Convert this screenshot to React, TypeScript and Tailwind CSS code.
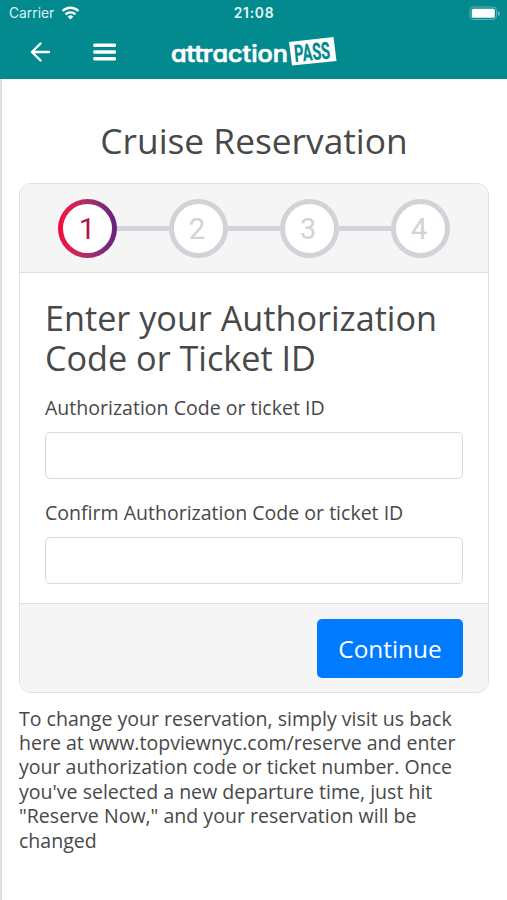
const LINE = 'whitespace-nowrap';

function StatusBar() {
  return (
    <div className="flex h-[26px] items-center px-[9px] pt-[2px] font-['Inter',sans-serif] text-white">
      <div className="flex flex-1 items-center gap-[7px]">
        <span className="text-[13.8px] leading-none text-[#dcf1f1]">Carrier</span>
        <svg className="-mt-[2px]" width="19" height="14" viewBox="0 0 18 14" fill="none" stroke="white" strokeWidth="2.3">
          <path d="M1 5a11.5 11.5 0 0 1 16 0" />
          <path d="M4 8.3a7.2 7.2 0 0 1 10 0" />
          <path d="M9 13.4 6.2 10.7a4 4 0 0 1 5.6 0Z" fill="white" stroke="none" />
        </svg>
      </div>
      <span className="pl-px text-[13.8px] leading-none font-semibold tracking-[0.8px] text-[#e8f6f6]">21:08</span>
      <div className="flex flex-1 justify-end">
        <svg className="-mt-[1px] -mr-[2px]" width="31" height="15" viewBox="0 0 31 15">
          <rect x="1" y="1" width="26.5" height="12.5" rx="3.5" fill="none" stroke="#5fb4b7" />
          <rect x="2.8" y="2.8" width="23" height="9" rx="1.5" fill="white" />
          <path d="M29 5v5q2-1 2-2.500t-2-2.500Z" fill="#6fbcc0" />
        </svg>
      </div>
    </div>
  );
}

function Logo() {
  return (
    <svg width="168" height="32" viewBox="0 0 168 32" className="ml-[54px] overflow-visible">
      <text
        x="1"
        y="25.500"
        textLength="117"
        lengthAdjust="spacingAndGlyphs"
        className="font-['Inter',sans-serif] text-[23px] font-medium [font-feature-settings:'cv11']"
        fill="white"
        stroke="white"
        strokeWidth="0.700"
        strokeLinejoin="round"
      >
        attraction
      </text>
      <path d="M17 14.300h19" stroke="white" strokeWidth="2.500" strokeLinecap="round" />
      <path d="m119 6 44.500-5 3 24-44.500 4.500Z" fill="white" />
      <text x="125" y="26" transform="rotate(-5.500 125 26)" textLength="36" lengthAdjust="spacingAndGlyphs" className="font-['Roboto',sans-serif] text-[24px] font-extrabold" fill="#038a8e">PASS</text>
    </svg>
  );
}

function Header() {
  return (
    <header className="h-[79px] bg-[#038a8e]">
      <StatusBar />
      <div className="flex h-[52px] items-center pl-[30px]">
        <svg width="21" height="20" viewBox="0 0 21 20" fill="none" stroke="white" strokeWidth="2.4" strokeLinecap="round" strokeLinejoin="round">
          <path d="M10.500 1.500 2 10l8.500 8.500M2 10h17" />
        </svg>
        <svg className="ml-[42px]" width="23" height="18" viewBox="0 0 23 18" stroke="white" strokeWidth="3.4" strokeLinecap="round">
          <path d="M1.700 2.200h20M1.700 9h20M1.700 15.800h20" />
        </svg>
        <Logo />
      </div>
    </header>
  );
}

function Steps() {
  return (
    <div className="flex h-[89px] items-center justify-center border-b border-[#dddfe1] bg-[#f5f5f5] font-['Roboto',sans-serif] text-[29.500px]">
      <div className="size-[59px] rounded-full bg-linear-to-r from-[#f80039] to-[#642080] p-[5px]">
        <div className="flex size-full items-center justify-center rounded-full bg-white pt-[2px] pr-px text-[#b01058]">1</div>
      </div>
      {[2, 3, 4].map((n) => (
        <div key={n} className="flex items-center">
          <div className="h-[5px] w-[52px] bg-[#d0d3d9]" />
          <div className="flex size-[59px] items-center justify-center rounded-full border-5 border-[#d0d3d7] bg-white pt-[2px] pr-[3px] text-[#d0d3d7]">{n}</div>
        </div>
      ))}
    </div>
  );
}

export default function App() {
  return (
    <div className="h-[900px] overflow-hidden bg-white font-['Open_Sans',sans-serif] text-[#484848]">
      <Header />
      <main className="h-[821px] border-l-2 border-[#dfdfdf] pr-[18px] pl-[17px]">
        <h1 className="pt-[36px] text-center text-[35.300px] leading-[50px]">Cruise Reservation</h1>
        <section className="mt-[18px] h-[510px] overflow-hidden rounded-[12px] border border-[#dddfe1]">
          <Steps />
          <div className="h-[330px] px-[25px] pt-[25px]">
            <h2 className="text-[34.200px] leading-[40px]">Enter your Authorization Code or Ticket ID</h2>
            <label className="mt-[18px] block text-[19.550px] leading-[24px]">
              Authorization Code or ticket ID
              <input className="mt-[12px] block h-[47px] w-full rounded-[5px] border border-[#d6dadd] bg-white" />
            </label>
            <label className="mt-[22px] block text-[19.550px] leading-[24px]">
              Confirm Authorization Code or ticket ID
              <input className="mt-[12px] block h-[47px] w-full rounded-[5px] border border-[#d6dadd] bg-white" />
            </label>
          </div>
          <div className="flex h-[90px] items-start justify-end border-t border-[#dddfe1] bg-[#f5f5f5] pt-[15px] pr-[25px]">
            <button className="h-[59px] w-[146px] rounded-[5px] bg-[#007bff] pt-[2px] text-[24.400px] text-white">Continue</button>
          </div>
        </section>
        <p className="mt-[13.600px] text-[19.560px] leading-[24.400px]">
          <span className={`block ${LINE}`}>To change your reservation, simply visit us back</span>
          <span className={`block ${LINE}`}>here at www.topviewnyc.com/reserve and enter</span>
          <span className={`block ${LINE}`}>your authorization code or ticket number. Once</span>
          <span className={`block ${LINE}`}>you've selected a new departure time, just hit</span>
          <span className={`block ${LINE}`}>"Reserve Now," and your reservation will be</span>
          <span className={`block ${LINE}`}>changed</span>
        </p>
      </main>
    </div>
  );
}
